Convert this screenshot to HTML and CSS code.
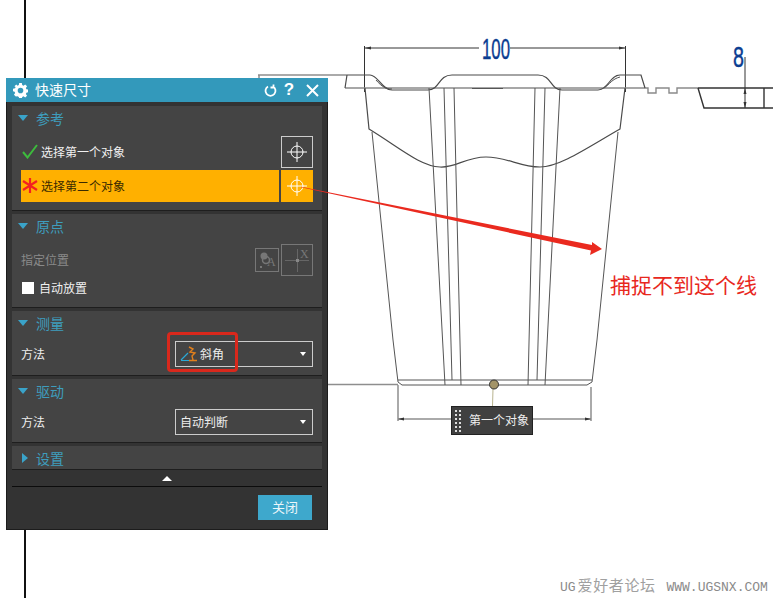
FILE: index.html
```html
<!DOCTYPE html>
<html lang="zh">
<head>
<meta charset="utf-8">
<title>快速尺寸</title>
<link rel="stylesheet" href="styles.css">
</head>
<body>
<main class="canvas">
  <svg class="drawing" width="773" height="598" viewBox="0 0 773 598" fill="none">
    <path class="axis" d="M25 0V78M25 530V598"/>
    <path class="grey" d="M258 75H347M259 75V78M328 384.500H398M398 385V421M591 387V421M398 419H451M533 419H591"/>
    <path class="dim" d="M364.500 46V92M625.500 46V92M365 48H479M510 48H625M745 57V108"/>
    <path class="dimhead" d="M365 48l6-1.500v3zM625 48l-6-1.500v3zM745 88l-1.500 6h3zM745 108l-1.500-6h3zM398 419l6-1.500v3zM591 419l-6-1.500v3z"/>
    <text class="dimtext" x="482" y="59" textLength="28" lengthAdjust="spacingAndGlyphs">100</text>
    <text class="dimtext" x="733" y="67" textLength="11" lengthAdjust="spacingAndGlyphs">8</text>
    <path class="base" d="M345 88H645M645 88H648V93H656V88H669V93H677V88H698"/>
    <path class="line" d="M347 75L345 88M347 75H370C378 75 382 90 392 90H428C440 90 438 75 452 75H538C552 75 550 90 562 90H598C608 90 610 75 620 75H641L645 88"/>
    <path class="thin" d="M376 80C382 87 386 89 392 89M604 88C610 84 612 79 620 77M472 88.500H503"/>
    <path class="thick" d="M698 88H773M698 88L704 108H773M764 88V108"/>
    <path class="line" d="M365 88L369 129C400 148 420 166 440 167C456 168 465 157 486 157C507 157 520 167 540 167C560 167 590 146 620 129L625 88"/>
    <path class="thin" d="M372 132L393 340L398 382L402 385H587L592 382L597 340L618 132M398 380H592M429 88L445 385M444 88L452 380M454 88L461 385M535 88L528 385M545 88L537 380M560 88L545 385"/>
    <path class="leader" d="M493 389L492.500 406"/>
    <circle class="dot" cx="494" cy="384.500" r="4.500"/>
  </svg>

  <section class="panel" aria-label="快速尺寸">
    <header class="titlebar">
      <svg class="gear" width="15" height="15" viewBox="0 0 16 16"><path d="M6.600 0h2.800l.4 2.200 1.400.6L13 1.500l2 2-1.300 1.800.6 1.400 2.200.4v2.800l-2.200.4-.6 1.400 1.300 1.800-2 2-1.800-1.300-1.400.6-.4 2.200H6.600l-.4-2.200-1.400-.6L3 14.500l-2-2 1.300-1.800-.6-1.400L0 8.900V6.100l2.200-.4.600-1.400L1.500 3.500l2-2 1.300 1.300 1.400-.6zM8 5a3 3 0 100 6 3 3 0 000-6z" fill-rule="evenodd"/></svg>
      <h1 class="title">快速尺寸</h1>
      <svg class="tool" width="13" height="13" viewBox="0 0 13 13"><path d="M4 2.500A5 5 0 1 0 9 2.500M9.500 0.500V3.500H6.500" fill="none" stroke="#fff" stroke-width="1.800"/></svg>
      <span class="help">?</span>
      <svg class="close" width="13" height="13" viewBox="0 0 13 13"><path d="M1 1L12 12M12 1L1 12" stroke="#fff" stroke-width="2"/></svg>
    </header>

    <div class="body">
      <section class="sec sec-ref">
        <h2 class="sechead"><i class="tri"></i>参考</h2>
        <div class="sel-row">
          <div class="sel-label">
            <svg class="mark" width="16" height="15" viewBox="0 0 16 15"><path d="M1 8L5.500 13.500L15 1" fill="none" stroke="#3dbb3d" stroke-width="2"/></svg>
            <span>选择第一个对象</span>
          </div>
          <button class="pick"><svg width="24" height="24" viewBox="0 0 24 24"><use href="#cross"/></svg></button>
        </div>
        <div class="sel-row">
          <div class="sel-label active">
            <svg class="mark" width="16" height="15" viewBox="0 0 16 15"><path d="M8 0V15M1 3L15 12M15 3L1 12" stroke="#f32020" stroke-width="2.200"/></svg>
            <span>选择第二个对象</span>
          </div>
          <button class="pick active"><svg width="24" height="24" viewBox="0 0 24 24"><use href="#cross"/></svg></button>
        </div>
      </section>

      <section class="sec sec-origin">
        <h2 class="sechead"><i class="tri"></i>原点</h2>
        <div class="origin-row">
          <span class="dimmed">指定位置</span>
          <span class="origin-btn small"><svg width="22" height="22" viewBox="0 0 22 22"><circle cx="8" cy="7" r="3.500" fill="#777"/><circle cx="10" cy="11" r="3.500" fill="none" stroke="#777" stroke-width="1.500"/><circle cx="5" cy="18" r="1" fill="#888"/><text class="glyph" x="11" y="17">A</text></svg></span>
          <span class="origin-btn big"><svg width="30" height="30" viewBox="0 0 30 30"><path d="M3 15.500H27M15.500 4V27" stroke="#666"/><rect x="14" y="14" width="3" height="3" fill="#888"/><text class="glyph" x="18" y="13">X</text></svg></span>
        </div>
        <label class="check"><i class="box"></i><span>自动放置</span></label>
      </section>

      <section class="sec sec-measure">
        <h2 class="sechead"><i class="tri"></i>测量</h2>
        <div class="field">
          <span class="flabel">方法</span>
          <div class="combo">
            <svg class="angle" width="18" height="16" viewBox="0 0 18 16"><path d="M1 14L8 7M1 14.500H9" stroke="#2aa9d6" stroke-width="1.200"/><path d="M9 1L13 3L10 6L15 7L12 10L13 14M9 14.500H17" fill="none" stroke="#e07f1c" stroke-width="1.400"/></svg>
            <span class="flabel">斜角</span>
            <i class="down"></i>
          </div>
        </div>
      </section>

      <section class="sec sec-drive">
        <h2 class="sechead"><i class="tri"></i>驱动</h2>
        <div class="field">
          <span class="flabel">方法</span>
          <div class="combo plain">
            <span class="flabel">自动判断</span>
            <i class="down"></i>
          </div>
        </div>
      </section>

      <section class="sec sec-set">
        <h2 class="sechead"><i class="tri right"></i>设置</h2>
      </section>

      <div class="more"><i class="up"></i></div>
      <div class="footer"><button class="closebtn">关闭</button></div>
    </div>
  </section>

  <div class="highlight"></div>

  <svg class="overlay" width="773" height="598" viewBox="0 0 773 598">
    <path class="arrow" d="M301 186.700L592 245L592 242L602 249L590 255L591 250.500L301 187.300Z"/>
  </svg>

  <div class="tag">
    <span class="grip"></span>
    <span class="flabel">第一个对象</span>
  </div>

  <p class="note">捕捉不到这个线</p>
  <p class="mark-text">UG<span class="cjk">爱好者论坛</span> WWW.UGSNX.COM</p>

  <svg class="defs" width="0" height="0">
    <defs>
      <g id="cross" fill="none" stroke="#fff" stroke-width="1">
        <circle cx="12" cy="12" r="6"/>
        <path d="M2 12H22M12 2V22"/>
      </g>
    </defs>
  </svg>
</main>
</body>
</html>
```

FILE: styles.css
```css
* { box-sizing: border-box; }
html, body { margin: 0; padding: 0; }
body {
  background: #fff;
  font-family: "Noto Sans CJK SC", "Liberation Sans", sans-serif;
  font-size: 12px;
  color: #eee;
}
.canvas { position: relative; width: 773px; height: 598px; overflow: hidden; }
.drawing, .overlay { position: absolute; left: 0; top: 0; }
.overlay { pointer-events: none; }
.defs { position: absolute; }

.axis { stroke: #111; stroke-width: 2; }
.grey { stroke: #8e8e8e; stroke-width: 1.500; }
.dim { stroke: #333; stroke-width: 1; }
.dimhead { fill: #333; }
.dimtext { font-family: "Liberation Sans", sans-serif; font-size: 29px; fill: #0b3d91; stroke: #0b3d91; stroke-width: .4; }
.base { stroke: #8a8a8a; stroke-width: 1.400; }
.line { stroke: #4a4a4a; stroke-width: 1.200; }
.thin { stroke: #555; stroke-width: 1; }
.thick { stroke: #333; stroke-width: 1.400; }
.leader { stroke: #b9b48f; stroke-width: 1; }
.dot { fill: #a39468; stroke: #333; stroke-width: 1; }
.arrow { fill: #ea2a1f; }

.panel {
  position: absolute;
  left: 6px;
  top: 78px;
  width: 322px;
  height: 452px;
  display: flex;
  flex-direction: column;
  background: #333;
  border: 1px solid #1c1c1c;
  border-top: 0;
}
.titlebar {
  height: 24px;
  flex: none;
  display: flex;
  align-items: center;
  background: #3399bb;
  padding: 0 9px 0 6px;
  margin: 0 -1px;
}
.gear { fill: #fff; margin-left: 1px; }
.title { margin: 0 0 2px 7px; flex: 1; font-size: 14px; font-weight: 400; color: #fff; line-height: 22px; }
.tool { margin-right: 6px; margin-left: -1px; }
.help { font-family: "Liberation Sans", sans-serif; font-size: 17px; font-weight: 700; color: #fff; width: 12px; margin-right: 11px; text-align: center; line-height: 24px; }

.body { flex: 1; display: flex; flex-direction: column; padding: 4px 5px 0; gap: 3px; }
.sec { background: #444; border-bottom: 1px solid #1e1e1e; padding: 0 9px; flex: none; }
.sec-ref { height: 105px; }
.sec-origin { height: 94px; }
.sec-measure { height: 65px; }
.sec-drive { height: 64px; }
.sec-set { height: 24px; overflow: hidden; }

.sechead {
  margin: 0;
  height: 26px;
  padding-bottom: 2px;
  display: flex;
  align-items: center;
  gap: 8px;
  font-size: 14px;
  font-weight: 400;
  color: #3e9dbd;
  line-height: 24px;
}
.tri { width: 0; height: 0; border-left: 5.500px solid transparent; border-right: 5.500px solid transparent; border-top: 6px solid #3aa3c9; margin-left: -3px; }
.tri.right { border-top: 5.500px solid transparent; border-bottom: 5.500px solid transparent; border-left: 6px solid #3aa3c9; border-right: 0; margin: 0 0 0 1px; }

.sel-row { display: flex; gap: 2px; }
.sec-ref .sel-row:first-of-type { margin-top: 4px; margin-bottom: 2px; }
.sel-label { width: 258px; height: 32px; padding-bottom: 2px; display: flex; align-items: center; gap: 3px; color: #f0f0f0; }
.sel-label .mark { flex: none; margin-left: 1px; }
.sel-label.active { background: #ffb000; color: #3a2a00; }
.pick { width: 32px; height: 32px; padding: 3px; margin: 0; background: transparent; border: 1px solid #ccc; display: flex; }
.pick.active { background: #ffb000; border-color: #ffb000; }

.origin-row { display: flex; align-items: center; height: 32px; margin-top: 4px; }
.dimmed { flex: 1; color: #8a8a8a; padding-bottom: 2px; }
.origin-btn { border: 1px solid #777; display: flex; flex: none; }
.origin-btn.small { width: 24px; height: 24px; margin-right: 2px; }
.origin-btn.big { width: 32px; height: 32px; }
.glyph { font-family: "Liberation Serif", serif; font-size: 12px; fill: #777; }
.check { display: flex; align-items: center; gap: 5px; height: 20px; margin: 2px 0 0 1px; color: #f0f0f0; }
.check span { padding-bottom: 2px; }
.box { width: 12px; height: 12px; background: #fff; flex: none; }

.flabel { padding-bottom: 2px; }
.field { display: flex; align-items: center; justify-content: space-between; height: 26px; margin-top: 4px; color: #eee; }
.combo { width: 138px; height: 26px; border: 1px solid #ccc; display: flex; align-items: center; gap: 2px; padding: 0 6px 0 4px; position: relative; }
.down { position: absolute; right: 6px; top: 10px; width: 0; height: 0; border-left: 3.500px solid transparent; border-right: 3.500px solid transparent; border-top: 4px solid #fff; }

.more { flex: none; height: 17px; margin-top: -3px; border-bottom: 1px solid #0c0c0c; display: flex; align-items: center; justify-content: center; }
.up { width: 0; height: 0; border-left: 5px solid transparent; border-right: 5px solid transparent; border-bottom: 5px solid #fff; margin-left: -1px; }
.footer { flex: 1; display: flex; justify-content: flex-end; align-items: flex-start; padding: 5px 10px 0 0; }
.closebtn { width: 54px; height: 25px; padding: 0 0 2px; border: 0; background: #3ea8cc; color: #eaf6fa; font: inherit; font-size: 13px; }

.highlight { position: absolute; left: 167px; top: 332px; width: 71px; height: 40px; border: 3px solid #d9281c; border-radius: 4px; }

.tag { position: absolute; left: 451px; top: 406px; width: 82px; height: 29px; background: #404040; border: 1px solid #222; display: flex; align-items: center; gap: 7px; padding-left: 2px; color: #eee; }
.grip {
  width: 8px;
  height: 23px;
  background-image: radial-gradient(circle, #ddd 1.100px, transparent 1.300px);
  background-size: 4px 4px;
}
.note { position: absolute; left: 610px; top: 269px; margin: 0; font-size: 21px; line-height: 30px; color: #e8281e; white-space: nowrap; }
.mark-text { position: absolute; left: 560px; top: 576px; margin: 0; font-family: "Liberation Mono", monospace; font-size: 13px; line-height: 18px; color: #8a8a8a; white-space: nowrap; }
.cjk { font-family: "Noto Sans CJK SC", sans-serif; font-size: 15px; color: #a0a0a0; margin: 0 3px 0 2px; letter-spacing: .6px; }
```
